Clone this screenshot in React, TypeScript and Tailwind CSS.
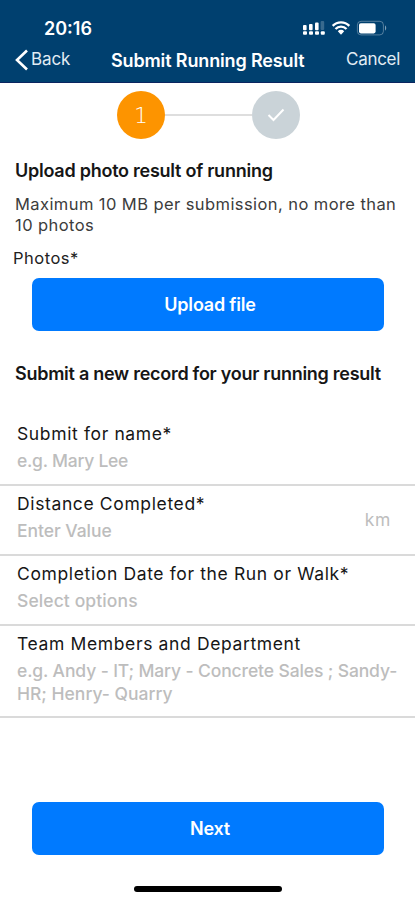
import type { ReactNode } from 'react';

function StatusIcons() {
  return (
    <svg className="h-4 w-[87px]" viewBox="0 0 87 16" fill="none">
      <g fill="#fff">
        <rect x="0" y="5" width="3.6" height="5.2" rx="1" />
        <rect x="6" y="4" width="3.6" height="6.2" rx="1" />
        <rect x="12" y="2.4" width="3.6" height="7.8" rx="1" />
        <rect x="17.6" y="1" width="3.6" height="9" rx="1" opacity=".22" />
        <rect x="0" y="11.2" width="4" height="3.6" rx="1" />
        <rect x="6" y="11.2" width="4" height="3.6" rx="1" />
        <rect x="12" y="11.2" width="4" height="3.6" rx="1" />
        <rect x="17.8" y="11.2" width="4" height="3.6" rx="1" />
        <path d="M38 14.8l-3.2-3.6a4.5 4.5 0 0 1 6.4 0z" />
        <rect x="56" y="3.2" width="16.6" height="10.2" rx="1.8" />
      </g>
      <path d="M29.7 5.8a11.7 11.7 0 0 1 16.6 0M32.5 9a7.6 7.6 0 0 1 11 0" stroke="#fff" strokeWidth="2.4" />
      <rect x="54.4" y="1.3" width="26" height="13.6" rx="3.6" stroke="#fff" strokeOpacity=".32" />
      <path d="M82 5.6c1.6.5 1.6 4.5 0 5z" fill="#fff" opacity=".5" />
    </svg>
  );
}

function Header() {
  return (
    <header className="h-[83px] border-b border-[#0b2560] bg-[#00406f] text-white">
      <div className="flex h-[46px] items-start justify-between pt-[18px] pr-[25px] pl-[44px]">
        <span className="text-[18px] leading-[21px] font-semibold">20:16</span>
        <div className="pt-[2px]"><StatusIcons /></div>
      </div>
      <div className="flex h-7 items-center pr-[15px] pl-[14px]">
        <button className="flex w-[97px] items-center">
          <svg className="h-[22px] w-[15px]" viewBox="0 0 15 22" fill="none" stroke="#fff" strokeWidth="2.6">
            <path d="M13 1.5L3 11l10 9.5" />
          </svg>
          <span className="-mt-[2px] ml-[2px] text-[17px] leading-[22px] tracking-[-0.1px] text-[#e2ecf4]">Back</span>
        </button>
        <h1 className="pt-[2px] text-[18px] leading-[22px] font-semibold tracking-[-0.14px] whitespace-nowrap">Submit Running Result</h1>
        <button className="-mt-[2px] ml-auto text-[17px] leading-[22px] tracking-[-0.3px] text-[#e2ecf4]">Cancel</button>
      </div>
    </header>
  );
}

function Steps() {
  return (
    <div className="mt-2 flex h-12 items-center pl-[117px]">
      <div className="flex size-12 items-center justify-center rounded-full bg-[#fd9400] font-['DejaVu_Sans',sans-serif] text-[22px] font-extralight text-white">1</div>
      <div className="h-[2px] w-[87px] bg-[#dedede]" />
      <div className="flex size-12 items-center justify-center rounded-full bg-[#cad3d8]">
        <svg className="h-[14px] w-[18px]" viewBox="0 0 18 14" fill="none" stroke="#fff" strokeWidth="2">
          <path d="M1.5 7l5 5L16.5 1.5" />
        </svg>
      </div>
    </div>
  );
}

function Field({ label, hint, height, unit }: { label: string; hint: ReactNode; height: string; unit?: string }) {
  return (
    <div className={`flex justify-between border-b-2 border-[#dadada] pl-[17px] ${height}`}>
      <div>
        <div className="text-[17.5px] leading-[26px] tracking-[0.63px] whitespace-nowrap text-[#161616]">{label}</div>
        <div className="pt-[2px] text-[17.5px] leading-[23px] font-medium whitespace-nowrap text-[#bdbdbd]">{hint}</div>
      </div>
      {unit && <span className="pt-[17px] pr-[24px] text-[17.5px] leading-[24px] tracking-[0.6px] text-[#bdbdbd]">{unit}</span>}
    </div>
  );
}

export default function App() {
  return (
    <div className="flex h-[900px] w-[415px] flex-col overflow-hidden bg-white font-['Inter','Liberation_Sans',sans-serif] text-[#161616]">
      <Header />
      <Steps />
      <section>
        <h2 className="mt-[21px] pl-[15px] text-[18px] leading-[22px] font-semibold tracking-[-0.25px] whitespace-nowrap">Upload photo result of running</h2>
        <p className="mt-[12px] pl-[15px] text-[16.5px] leading-[21px] tracking-[0.42px] whitespace-nowrap text-[#3c3c3c]">
          Maximum 10 MB per submission, no more than<br />10 photos
        </p>
        <div className="mt-[11px] pl-[13px] text-[16.5px] leading-[22px] tracking-[0.5px] text-[#222]">Photos*</div>
        <button className="mt-[9px] ml-8 block h-[53px] w-[352px] rounded-[7px] bg-[#007aff] pl-[4px] text-[18px] leading-[53px] font-semibold tracking-[-0.2px] text-white">Upload file</button>
      </section>
      <h2 className="mt-[32px] pl-[15px] text-[18px] leading-[22px] font-semibold tracking-[-0.27px] whitespace-nowrap">Submit a new record for your running result</h2>
      <section className="mt-[36px]">
        <Field label="Submit for name*" height="h-[65px]" hint={<span className="tracking-[-0.25px]">e.g. Mary Lee</span>} />
        <div className="h-[5px]" />
        <Field label="Distance Completed*" height="h-[65px]" unit="km" hint={<span className="tracking-[-0.05px]">Enter Value</span>} />
        <div className="h-[5px]" />
        <Field label="Completion Date for the Run or Walk*" height="h-[65px]" hint={<span className="tracking-[0.1px]">Select options</span>} />
        <div className="h-[5px]" />
        <Field
          label="Team Members and Department"
          height="h-[87px]"
          hint={<><span className="tracking-[-0.12px]">e.g. Andy - IT; Mary - Concrete Sales ; Sandy-</span><br />HR; Henry- Quarry</>}
        />
      </section>
      <button className="mt-[84px] ml-8 block h-[53px] w-[352px] shrink-0 rounded-[7px] bg-[#007aff] pl-[4px] text-[18px] leading-[53px] font-semibold tracking-[-0.2px] text-white">Next</button>
      <div className="mt-[31px] ml-[134px] h-[6px] w-[148px] shrink-0 rounded-full bg-black" />
    </div>
  );
}
